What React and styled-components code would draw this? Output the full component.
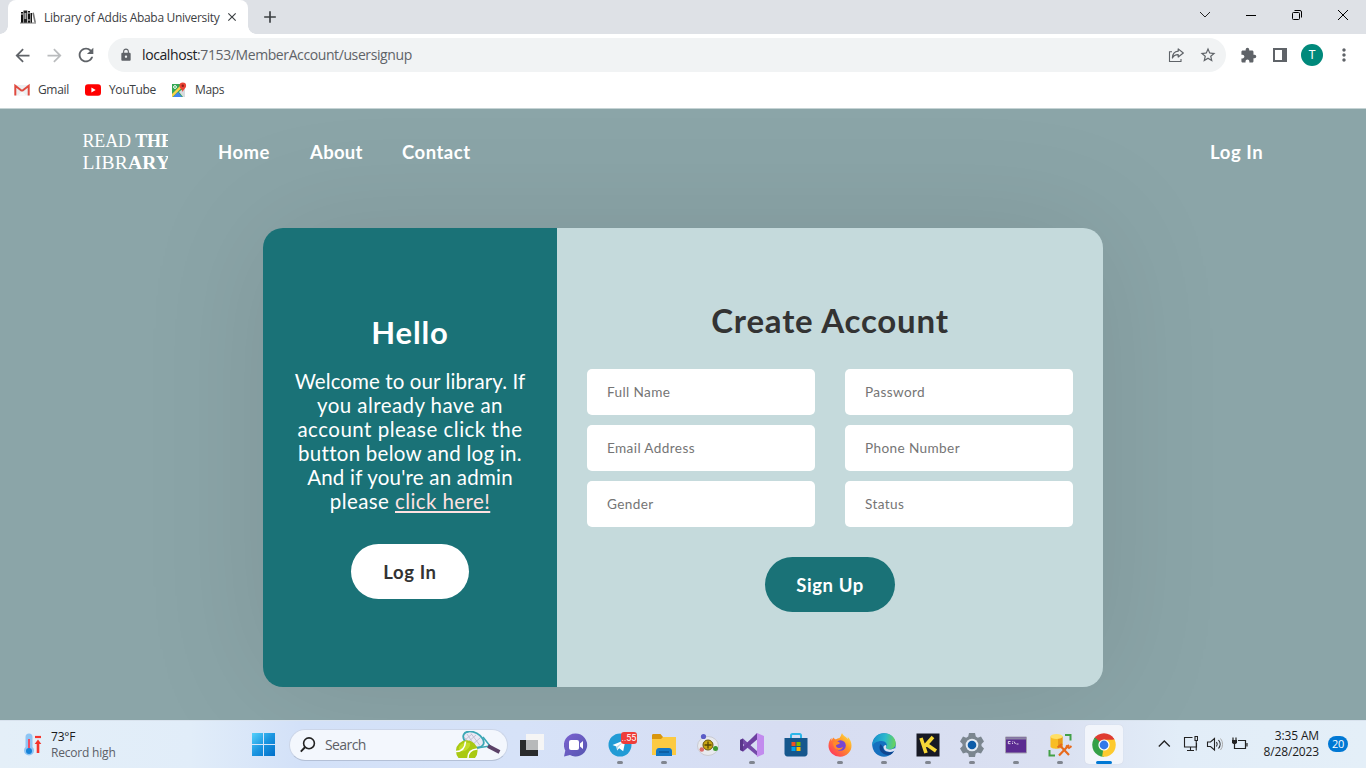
import React from "react";
import styled, { createGlobalStyle, css } from "styled-components";
import { MdArrowBack, MdArrowForward, MdRefresh, MdLock, MdStarBorder, MdExtension, MdMoreVert, MdClose, MdAdd } from "react-icons/md";

const GlobalStyle = createGlobalStyle`
  * { box-sizing: border-box; }
  html, body { margin: 0; padding: 0; }
  body { width: 1366px; height: 768px; overflow: hidden; }
  svg { display: block; flex: none; }
`;

const uiFont = css`font-family: "Open Sans", "Noto Sans", sans-serif;`;
const siteFont = css`font-family: Lato, "Open Sans", sans-serif;`;

const Screen = styled.div`
  width: 1366px;
  height: 768px;
  display: flex;
  flex-direction: column;
  overflow: hidden;
  ${uiFont}
`;

/* Browser chrome */
const TabStrip = styled.div`
  height: 34px;
  flex: none;
  display: flex;
  background: #dee1e6;
  padding-left: 8px;
`;
const Tab = styled.div`
  position: relative;
  width: 240px;
  height: 34px;
  display: flex;
  align-items: center;
  padding: 0 9px 0 12px;
  background: #fff;
  border-radius: 8px 8px 0 0;
  &::before, &::after {
    content: "";
    position: absolute;
    bottom: 0;
    width: 8px;
    height: 8px;
  }
  &::before { left: -8px; background: radial-gradient(circle at 0 0, transparent 7.5px, #fff 8px); }
  &::after { right: -8px; background: radial-gradient(circle at 100% 0, transparent 7.5px, #fff 8px); }
`;
const TabTitle = styled.span`
  margin-left: 8px;
  width: 181px;
  font-size: 12px;
  letter-spacing: -0.3px;
  color: #3c4043;
  white-space: nowrap;
`;
const NewTab = styled.div`
  width: 44px;
  display: flex;
  align-items: center;
  justify-content: center;
  color: #3c4043;
`;
const WindowControls = styled.div`
  margin-left: auto;
  display: flex;
  height: 29px;
`;
const WindowButton = styled.div`
  width: 46px;
  display: flex;
  align-items: center;
  justify-content: center;
`;
const Toolbar = styled.div`
  height: 38px;
  flex: none;
  display: flex;
  align-items: center;
  padding: 4px 6px 0;
  background: #fff;
`;
const ToolButton = styled.div`
  width: 32px;
  height: 34px;
  display: flex;
  align-items: center;
  justify-content: center;
  color: ${(p) => (p.$faded ? "#babcbe" : "#5f6368")};
`;
const Omnibox = styled.div`
  width: 1118px;
  height: 34px;
  margin: 0 6px;
  padding: 0 2px 0 11px;
  display: flex;
  align-items: center;
  border-radius: 17px;
  background: #f1f3f4;
  color: #5f6368;
`;
const Url = styled.span`
  flex: 1;
  margin-left: 9px;
  padding-bottom: 1px;
  font-size: 14px;
  letter-spacing: -0.4px;
  white-space: nowrap;
  color: #5f6368;
  b { font-weight: 400; color: #202124; }
`;
const Avatar = styled.div`
  width: 22px;
  height: 22px;
  border-radius: 50%;
  background: #00897b;
  color: #fff;
  font: 12px/22px Roboto, sans-serif;
  text-align: center;
`;
const Bookmarks = styled.div`
  height: 37px;
  flex: none;
  display: flex;
  align-items: center;
  padding: 0 14px 1px;
  background: #fff;
  border-bottom: 1px solid #c5d3d4;
`;
const Bookmark = styled.div`
  width: ${(p) => p.$width}px;
  display: flex;
  align-items: center;
  gap: 8px;
  font-size: 12px;
  letter-spacing: -0.35px;
  color: #3c4043;
`;

/* Site */
const Site = styled.main`
  height: 611px;
  flex: none;
  background: #8ba5a8;
  overflow: hidden;
  ${siteFont}
`;
const Nav = styled.nav`
  height: 86px;
  display: flex;
  align-items: center;
  padding: 0 103px 0 82px;
  color: #fff;
`;
const Brand = styled.div`
  width: 86px;
  margin-right: 50px;
  padding-left: 0.5px;
  overflow: hidden;
  white-space: nowrap;
  font-family: "Liberation Serif", serif;
`;
const BrandLine = styled.div`
  font-size: ${(p) => p.$size}px;
  line-height: 22px;
  letter-spacing: ${(p) => p.$spacing}px;
`;
const NavLink = styled.a`
  width: ${(p) => p.$width}px;
  margin-right: ${(p) => (p.$last ? 0 : 40)}px;
  margin-left: ${(p) => (p.$last ? "auto" : 0)};
  padding-bottom: 1px;
  font-size: 18.5px;
  line-height: 22px;
  font-weight: 700;
  letter-spacing: ${(p) => p.$spacing || 0}px;
  white-space: nowrap;
`;
const Card = styled.section`
  width: 840px;
  height: 459px;
  margin: 33px auto 0;
  display: flex;
  border-radius: 20px;
  overflow: hidden;
  box-shadow: 0 0 128px rgba(0, 0, 0, 0.1);
`;
const Welcome = styled.div`
  width: 294px;
  display: flex;
  flex-direction: column;
  align-items: center;
  padding-top: 86px;
  background: #1a7277;
  color: #fff;
`;
const Hello = styled.h1`
  margin: 0;
  font-size: 31px;
  line-height: 36px;
  font-weight: 700;
  letter-spacing: 0.9px;
`;
const Message = styled.p`
  margin: 19px 0 31px;
  font-size: 20.5px;
  line-height: 24px;
  text-align: center;
`;
const MessageLine = styled.span`
  display: block;
  white-space: nowrap;
  letter-spacing: ${(p) => p.$spacing || 0}px;
  a { color: #ffe1e1; text-decoration: underline; }
`;
const PillButton = styled.button`
  width: ${(p) => p.$width}px;
  height: 55px;
  padding: 0;
  border: 0;
  border-radius: 28px;
  background: ${(p) => (p.$primary ? "#1a7277" : "#fff")};
  color: ${(p) => (p.$primary ? "#fff" : "#333")};
  font-size: 18.5px;
  line-height: 22px;
  font-weight: 700;
  letter-spacing: 0.6px;
  ${siteFont}
`;
const SignUp = styled.form`
  flex: 1;
  display: flex;
  flex-direction: column;
  align-items: center;
  padding-top: 73px;
  background: #c5dadc;
`;
const FormTitle = styled.h2`
  margin: 0 0 30px;
  font-size: 33px;
  line-height: 38px;
  font-weight: 700;
  letter-spacing: 0.8px;
  color: #333;
`;
const Fields = styled.div`
  display: grid;
  grid-template-columns: 228px 228px;
  gap: 10px 30px;
  margin-bottom: 30px;
`;
const Field = styled.input`
  height: 46px;
  padding: 0 20px;
  border: 0;
  border-radius: 5px;
  background: #fff;
  font-size: 13.6px;
  letter-spacing: 0.38px;
  ${siteFont}
  &::placeholder { color: #757575; }
`;

/* Taskbar */
const Taskbar = styled.footer`
  height: 48px;
  flex: none;
  display: flex;
  align-items: center;
  background: linear-gradient(90deg, #e4eff8 0, #e1edf9 190px, #d3e1f8 300px, #d6e2f8 520px, #d7ddf2 780px, #dae0f1 1050px, #e2edf8 1180px, #e4eff8 1366px);
  border-top: 1px solid #d9e3ee;
`;
const Weather = styled.div`
  width: 242px;
  flex: none;
  padding-left: 23px;
  display: flex;
  align-items: center;
  gap: 8px;
`;
const WeatherText = styled.div`
  font-size: 12px;
  line-height: 16px;
  color: #1b1b1b;
  letter-spacing: -0.2px;
  small { display: block; font-size: 12px; color: #5b6067; }
`;
const TaskSlot = styled.div`
  position: relative;
  width: ${(p) => (p.$active ? 38 : 44)}px;
  height: ${(p) => (p.$active ? 39 : 47)}px;
  margin: ${(p) => (p.$active ? "0 3px" : 0)};
  flex: none;
  display: flex;
  align-items: center;
  justify-content: center;
  ${(p) => p.$active && css`background: #f2f5fb; border-radius: 4px; box-shadow: 0 0 1px #c0c8d5;`}
  &::after {
    content: "";
    display: ${(p) => (p.$open ? "block" : "none")};
    position: absolute;
    bottom: ${(p) => (p.$active ? 0 : 4)}px;
    left: 50%;
    width: ${(p) => (p.$active ? 16 : 6)}px;
    height: 3px;
    transform: translateX(-50%);
    border-radius: 2px;
    background: ${(p) => (p.$active ? "#0078d4" : "#80858f")};
  }
`;
const SearchBox = styled.div`
  width: 219px;
  height: 32px;
  flex: none;
  margin: 0 2px 0 3px;
  padding: 0 6px 0 10px;
  display: flex;
  align-items: center;
  border-radius: 16px;
  border: 1px solid #cbd5e8;
  border-bottom-color: #b4c0d6;
  background: #f3f7fd;
  font-size: 14px;
  color: #5d6066;
`;
const SearchLabel = styled.span`
  flex: 1;
  margin-left: 9px;
  padding-bottom: 1px;
  letter-spacing: -0.6px;
`;
const Badge = styled.span`
  position: absolute;
  top: 11px;
  right: 5px;
  width: 16px;
  height: 12px;
  border-radius: 3px;
  background: #ee3d3a;
  color: #fff;
  font: 9px/12px Roboto, sans-serif;
  text-align: center;
`;
const Tray = styled.div`
  margin-left: auto;
  padding-right: 18px;
  display: flex;
  align-items: center;
`;
const TrayIcons = styled.div`
  display: flex;
  align-items: center;
  gap: 8px;
  padding-bottom: 1px;
`;
const Clock = styled.div`
  width: 68px;
  margin: 0 9px 1px 2px;
  text-align: right;
  font-size: 12px;
  line-height: 16px;
  letter-spacing: -0.15px;
  white-space: nowrap;
  color: #1b1b1b;
`;
const Count = styled.div`
  width: 20px;
  height: 16px;
  margin-bottom: 1px;
  border-radius: 8px;
  background: #0078d4;
  color: #fff;
  font-size: 11px;
  line-height: 16px;
  letter-spacing: -0.4px;
  text-align: center;
`;

const Svg = ({ w = 24, h = w, vb = `0 0 ${w} ${h}`, children }) => (
  <svg width={w} height={h} viewBox={vb} fill="none">{children}</svg>
);

const BooksIcon = () => (
  <Svg w={16}>
    <path d="M1 3h2v11H1zM8 2h2v12H8zM10.5 4h1.5v10h-1.5z" fill="#111" />
    <path d="M3.5 1.5h3.8V14H3.5z" fill="#222" />
    <path d="M4.400 4h2v6h-2z" fill="#aaa" />
    <path d="M0 14h16" stroke="#777" />
    <path d="m12.300 4 1.600-.4L16 13.600h-1.600z" fill="#777" />
    <path d="M1 5h2M8 4h2M8 11h2" stroke="#ddd" />
  </Svg>
);
const ShareIcon = () => (
  <Svg w={16} vb="0 0 16 16">
    <path d="M4 4.700H1.500v9.800h11.500v-2.500" stroke="#5f6368" strokeWidth="1.100" />
    <path d="M10.200 1.900 15.300 6l-5.100 4V7.700C7.500 7.600 5.600 8.700 4.400 11c.1-4 2.200-6.400 5.800-6.800z" stroke="#5f6368" strokeWidth="1.200" strokeLinejoin="round" />
  </Svg>
);
const GmailIcon = () => (
  <Svg w={16}>
    <path d="M1 3h14v10.500H1z" fill="#eceff1" />
    <path d="M1.300 13.500V3.800L8 9l6.700-5.200v9.700" stroke="#e04b40" strokeWidth="2" />
    <path d="M4 13.500 8 9l4 4.500z" fill="#fafafa" />
  </Svg>
);
const YouTubeIcon = () => (
  <Svg w={16}><rect y="2.200" width="16" height="11.600" rx="3" fill="#f00" /><path d="m6.400 5.500 4.300 2.500-4.300 2.500z" fill="#fff" /></Svg>
);
const MapsIcon = () => (
  <Svg w={16}>
    <path d="M1 2h12v13H1z" fill="#34a853" />
    <path d="m2 15 5-5 4 5z" fill="#4285f4" />
    <path d="m9 9 5-3v9h-2L8 10z" fill="#d8dce0" />
    <path d="m1 12 8-8 1.700 1.700L1.500 15H1z" fill="#fbd24b" />
    <circle cx="4" cy="5" r="1.400" stroke="#fff" />
    <path d="M11.800 10C11 7 8.500 6.500 8.500 3.800a3.300 3.300 0 0 1 6.600 0C15.100 6.500 12.500 7 11.800 10z" fill="#ea4335" />
    <circle cx="11.800" cy="3.800" r="1.200" fill="#8c2018" />
  </Svg>
);

const ThermometerIcon = () => (
  <Svg w={20} h={24}>
    <path d="M2.500 4a3.500 3.500 0 0 1 7 0v10a5 5 0 1 1-7 0z" fill="#8fc5f4" />
    <path d="M5 6h2v11H5z" fill="#ef4d63" />
    <circle cx="6" cy="18" r="3" fill="#1683d8" />
    <path d="M12 4h6" stroke="#f5342b" strokeWidth="2.200" />
    <path d="m15 6.500 3.300 4.500h-2v9h-2.600v-9h-2z" fill="#f5342b" />
  </Svg>
);
const WindowsIcon = () => (
  <Svg w={24}>
    <defs><linearGradient id="win" x1="0" y1="0" x2="1" y2="1"><stop stopColor="#55d1fb" /><stop offset=".5" stopColor="#1b95e0" /><stop offset="1" stopColor="#006fc9" /></linearGradient></defs>
    <path d="M0 0h11v11H0zM12 0h11v11H12zM0 12h11v11H0zM12 12h11v11H12z" fill="url(#win)" />
  </Svg>
);
const SearchIcon = () => (
  <Svg w={16}><circle cx="9" cy="6.300" r="5.400" stroke="#222" strokeWidth="1.600" /><path d="M5.200 10 .8 14.600" stroke="#222" strokeWidth="1.900" /></Svg>
);
const TennisIcon = () => (
  <Svg w={46} h={28}>
    <path d="m22 17 13-2-7-9" stroke="#3ba7b5" strokeWidth="1.500" />
    <ellipse cx="18.500" cy="8.500" rx="11" ry="7" transform="rotate(28 18.500 8.500)" fill="#e9e9f4" stroke="#3ba7b5" strokeWidth="1.800" />
    <path d="M12 3l8 12M16 2.500l9 12M9 6l8 9M21 4 12 12M25 7 16 15M17 3l-7 6" stroke="#b9b6cc" strokeWidth=".8" />
    <path d="m33 15 11.500 6" stroke="#5b4267" strokeWidth="3.800" />
    <path d="M3.500 27a10.800 10.800 0 1 1 16.500 0z" fill="#a9c912" />
    <path d="M4 16a9 9 0 0 1 11-4c1 3-2 7-6 8s-6-1-5-4z" fill="#c3dc28" />
    <path d="M1 20.500c6 0 9-3 9.500-10M13 27c0-5 3-8.500 9-9" stroke="#fff" strokeWidth="1.600" />
  </Svg>
);
const TaskViewIcon = () => (
  <Svg w={24}>
    <path d="M0 7h18v16H0z" fill="#292b2c" />
    <path d="M6 1h18v16H6z" fill="#f5f5f5" /><path d="M6 7h12v10H6z" fill="#b7b9ba" />
  </Svg>
);
const ChatIcon = () => (
  <Svg w={24}>
    <defs><linearGradient id="chat" x1="0" y1="0" x2="1" y2="1"><stop stopColor="#7b62d0" /><stop offset="1" stopColor="#5556b0" /></linearGradient></defs>
    <path d="M11.500 .5a11.500 11.500 0 1 1-5.500 21.500L0 23.500l1.300-6A11.500 11.500 0 0 1 11.500 .5z" fill="url(#chat)" />
    <rect x="5" y="7" width="10" height="10" rx="2" fill="#fff" /><path d="m16 10.500 3-2.500v8l-3-2.500z" fill="#fff" />
  </Svg>
);
const TelegramIcon = () => (
  <Svg w={24}>
    <circle cx="12" cy="12" r="11.500" fill="#219bd5" />
    <path d="m4.500 12 13-5.200-2.300 11.500-4-3-2.100 2.100-.8-4z" fill="#fff" /><path d="m8.500 13.400 6.500-4.300-5 5.500-.5 2.800z" fill="#b9dbea" />
  </Svg>
);
const FolderIcon = () => (
  <Svg w={26} h={24}>
    <path d="M1 2.500c0-1 .5-1.500 1.500-1.500h7L12 4h12.500v8H1z" fill="#d9960d" />
    <path d="M1 6h9l2-2h13v18H1z" fill="#fcca42" />
    <path d="M5 23v-5c0-1.500 1-3 3-3h10c2 0 3 1.500 3 3v5z" fill="#1477c5" /><path d="M8 19h10" stroke="#0a579a" strokeWidth="1.500" />
  </Svg>
);
const AtomIcon = () => (
  <Svg w={24}>
    <ellipse cx="12" cy="13" rx="10.500" ry="9.500" fill="#e8eaee" stroke="#cacbd2" />
    <circle cx="12" cy="12" r="5" fill="#c9a514" stroke="#65560c" /><path d="M12 8.500v7M8.500 12h7" stroke="#574706" strokeWidth="1.300" />
    <circle cx="7.500" cy="3.500" r="2.600" fill="#5b5cc7" /><circle cx="5.800" cy="16.500" r="2.300" fill="#da6b6b" /><circle cx="19.500" cy="15.500" r="2.500" fill="#3b9a32" />
  </Svg>
);
const VisualStudioIcon = () => (
  <Svg w={24}>
    <path d="M0 7 3 5.500 18 19v4.500L0 8.500z" fill="#744aa8" />
    <path d="M0 17 3 18.500 18 5V.5L0 15.500z" fill="#8050b5" />
    <path d="M0 7 3 5.500v13L0 17z" fill="#59368a" />
    <path d="m17 0 7 3v18l-7 3z" fill="#c28bee" /><path d="m3 18.500 14-12V0L3 14z" fill="#6c40a0" />
  </Svg>
);
const StoreIcon = () => (
  <Svg w={24}>
    <path d="M7 6V2.500C7 1.500 7.500 1 8.500 1h7c1 0 1.500.5 1.500 1.500V6" stroke="#2bb6e9" strokeWidth="2" />
    <path d="M.5 5h23v15.500c0 1.500-1 3-3 3h-17c-2 0-3-1.500-3-3z" fill="#16578d" />
    <path d="M7.500 9h4v4h-4z" fill="#f25022" /><path d="M12.500 9h4v4h-4z" fill="#7fba00" /><path d="M7.500 14h4v4h-4z" fill="#00a4ef" /><path d="M12.500 14h4v4h-4z" fill="#ffb900" />
  </Svg>
);
const FirefoxIcon = () => (
  <Svg w={24}>
    <defs><linearGradient id="fox" x1="1" y1="0" x2=".1" y2="1"><stop stopColor="#fff04a" /><stop offset=".45" stopColor="#ff9426" /><stop offset="1" stopColor="#ff2b65" /></linearGradient></defs>
    <path d="M14 0c1 3 4 3.500 6 6 0-1-.2-2-.6-2.500 3 3 4.100 6 4.100 9A11.500 11 0 0 1 .5 13C.5 9 2 6.500 3.500 5v3c.5-2 1.500-3 2-3.500.5 1 1.500 1.800 2.500 1.800C9 6 10 5 11.500 5 12.500 4 13 2 14 0z" fill="url(#fox)" />
    <circle cx="12.500" cy="12.500" r="5.300" fill="#7846d1" /><path d="M5 9c3-1 5-1 7 1-1 2-4 1-4 3 1 3 5 2 7 1-2 5-10 4-10-5z" fill="#ff8a2a" />
  </Svg>
);
const EdgeIcon = () => (
  <Svg w={24}>
    <defs>
      <linearGradient id="edgeTop" x1="0" y1=".3" x2="1" y2=".4"><stop stopColor="#168dcc" /><stop offset=".55" stopColor="#2bb9cd" /><stop offset="1" stopColor="#69d359" /></linearGradient>
    </defs>
    <circle cx="12" cy="12" r="11.700" fill="#1570bf" />
    <path d="M.3 11C1.500 4 6 .3 12 .3c7 0 11.700 4.700 11.700 10 0 4-3 6-6.500 6-2.500 0-4-1-3-2.300 2-3-1-6-4.500-6C5 8 1 10 .3 14z" fill="url(#edgeTop)" />
    <path d="M8.500 11c-3 5 1 11 8 11 2 0 4-1.500 5.500-4-5 2.500-11 1-11-4z" fill="#0f4690" />
    <path d="M14 12c1 2-1 2.300.5 3.600 2 1.500 6 1 8-.6l1 2c-4 3.500-12 2-12-3 0-1 1-2 2.500-2z" fill="#dce2f4" />
  </Svg>
);
const KIcon = () => (
  <Svg w={24}>
    <path d="M.5.5h23v23H.5z" fill="#171924" />
    <path d="m5 5 5 15M17 4l-8 9M10 11l10 7" stroke="#f6d737" strokeWidth="3.600" />
  </Svg>
);
const SettingsIcon = () => (
  <Svg w={24}>
    <path d="m9 0 6 0 .8 3.500 2 1.200L21 3.500l3 5-2.500 2.500v2l2.500 2.500-3 5-3.300-1.100-2 1.200L15 24H9l-.8-3.400-2-1.200L3 20.500l-3-5L2.500 13v-2L0 8.500l3-5 3.200 1.200 2-1.200z" fill="#7b868f" />
    <circle cx="12" cy="12" r="6.300" fill="#e4ebf3" /><circle cx="12" cy="12" r="4.300" fill="#0d5ca8" />
  </Svg>
);
const TerminalIcon = () => (
  <Svg w={24}>
    <path d="M1.500 4h21v16h-21z" fill="#5b2b91" stroke="#a3a1ae" /><path d="M2 4.500h20v2H2z" fill="#8b82a4" />
    <path d="M6.500 8.500H4.300v2.200h2.200M8.500 8.500v.8M8.500 10v1M10 8.500l1.500 2.500M12.500 11h2" stroke="#fff" strokeWidth=".8" />
  </Svg>
);
const DatabaseIcon = () => (
  <Svg w={24}>
    <path d="M2.500 3.500v10c0 3 12 3 12 0v-10z" fill="#f8bd24" /><path d="M10 4v11c3 0 4.500-1 4.500-1.500v-10z" fill="#e89a18" /><ellipse cx="8.500" cy="3.500" rx="6" ry="2.500" fill="#ffdf65" />
    <path d="M17 2h5.500v5.500M1.500 17v5.500H7" stroke="#42a047" strokeWidth="2" />
    <path d="m11.500 12 9.500 10M21 12 11 22.500" stroke="#e76a1d" strokeWidth="2.200" /><path d="M9.500 14.500 14 11M18 12.500l3 2.500 2.500-2" stroke="#e76a1d" strokeWidth="2" />
  </Svg>
);
const ChromeIcon = () => (
  <Svg w={24}>
    <path d="M12 12 1.800 6.100A11.800 11.800 0 0 1 22.200 6.100z" fill="#df3c31" />
    <path d="M12 12 22.200 6.100A11.800 11.800 0 0 1 12 23.800z" fill="#fdca2f" />
    <path d="M12 12v11.800A11.800 11.800 0 0 1 1.800 6.100z" fill="#34a047" />
    <path d="M12 6.400h10.400a11.800 11.800 0 0 1 .4 1L12 12z" fill="#fdca2f" />
    <path d="m16.850 14.800-5.200 9-1.500-.2L12 12z" fill="#fdca2f" />
    <path d="m7.150 14.800-5.200-9L2.900 4.500 12 12z" fill="#34a047" />
    <path d="M12 6.400h10.400L21.700 5.300 12 4z" fill="#df3c31" />
    <circle cx="12" cy="12" r="5.600" fill="#fff" /><circle cx="12" cy="12" r="4.400" fill="#3279ea" />
  </Svg>
);

const taskbarApps = [
  { Icon: TaskViewIcon }, { Icon: ChatIcon }, { Icon: TelegramIcon, open: true, badge: "..55" },
  { Icon: FolderIcon, open: true }, { Icon: AtomIcon }, { Icon: VisualStudioIcon, open: true },
  { Icon: StoreIcon }, { Icon: FirefoxIcon, open: true }, { Icon: EdgeIcon, open: true },
  { Icon: KIcon, open: true }, { Icon: SettingsIcon, open: true }, { Icon: TerminalIcon, open: true },
  { Icon: DatabaseIcon, open: true }, { Icon: ChromeIcon, open: true, active: true },
];

const BrowserChrome = () => (
  <>
    <TabStrip>
      <Tab><BooksIcon /><TabTitle>Library of Addis Ababa University</TabTitle><MdClose size={14} color="#3c4043" /></Tab>
      <NewTab><MdAdd size={20} /></NewTab>
      <WindowControls>
        <WindowButton><Svg w={12}><path d="m1 3 5 5 5-5" stroke="#222" /></Svg></WindowButton>
        <WindowButton><Svg w={12}><path d="M1 6.500h10" stroke="#000" /></Svg></WindowButton>
        <WindowButton><Svg w={12}><rect x="1.500" y="3.500" width="7" height="7" rx="1" stroke="#000" /><path d="M3.500 1.500H9a1.500 1.500 0 0 1 1.500 1.500v5.500" stroke="#000" /></Svg></WindowButton>
        <WindowButton><Svg w={12}><path d="m1 1 10 10M11 1 1 11" stroke="#000" /></Svg></WindowButton>
      </WindowControls>
    </TabStrip>
    <Toolbar>
      <ToolButton><MdArrowBack size={21} /></ToolButton>
      <ToolButton $faded><MdArrowForward size={21} /></ToolButton>
      <ToolButton><MdRefresh size={22} /></ToolButton>
      <Omnibox>
        <MdLock size={14} />
        <Url><b>localhost</b>:7153/MemberAccount/usersignup</Url>
        <ToolButton><ShareIcon /></ToolButton>
        <ToolButton><MdStarBorder size={18} /></ToolButton>
      </Omnibox>
      <ToolButton><MdExtension size={17} /></ToolButton>
      <ToolButton><Svg w={14}><path d="M1 1h12v12H1z" stroke="#5f6368" strokeWidth="2" /><path d="M9 1h4v12H9z" fill="#5f6368" /></Svg></ToolButton>
      <ToolButton><Avatar>T</Avatar></ToolButton>
      <ToolButton><MdMoreVert size={20} /></ToolButton>
    </Toolbar>
    <Bookmarks>
      <Bookmark $width={71}><GmailIcon />Gmail</Bookmark>
      <Bookmark $width={86}><YouTubeIcon />YouTube</Bookmark>
      <Bookmark $width={60}><MapsIcon />Maps</Bookmark>
    </Bookmarks>
  </>
);

const SignUpPage = () => (
  <Site>
    <Nav>
      <Brand>
        <BrandLine $size={18} $spacing={-0.15}>READ <b>THE</b></BrandLine>
        <BrandLine $size={19.5} $spacing={0.25}>LIBR<b>ARY</b></BrandLine>
      </Brand>
      <NavLink $width={52} $spacing={0.5}>Home</NavLink>
      <NavLink $width={52} $spacing={0.3}>About</NavLink>
      <NavLink $width={68} $spacing={0.5}>Contact</NavLink>
      <NavLink $width={53} $spacing={0.6} $last>Log In</NavLink>
    </Nav>
    <Card>
      <Welcome>
        <Hello>Hello</Hello>
        <Message>
          <MessageLine $spacing={0.1}>Welcome to our library. If</MessageLine>
          <MessageLine $spacing={0.42}>you already have an</MessageLine>
          <MessageLine $spacing={0.5}>account please click the</MessageLine>
          <MessageLine $spacing={0.27}>button below and log in.</MessageLine>
          <MessageLine $spacing={0.22}>And if you're an admin</MessageLine>
          <MessageLine $spacing={0.42}>please <a>click here!</a></MessageLine>
        </Message>
        <PillButton type="button" $width={118}>Log In</PillButton>
      </Welcome>
      <SignUp>
        <FormTitle>Create Account</FormTitle>
        <Fields>
          <Field placeholder="Full Name" />
          <Field placeholder="Password" />
          <Field placeholder="Email Address" />
          <Field placeholder="Phone Number" />
          <Field placeholder="Gender" />
          <Field placeholder="Status" />
        </Fields>
        <PillButton type="button" $width={130} $primary>Sign Up</PillButton>
      </SignUp>
    </Card>
  </Site>
);

const WindowsTaskbar = () => (
  <Taskbar>
    <Weather><ThermometerIcon /><WeatherText>73°F<small>Record high</small></WeatherText></Weather>
    <TaskSlot><WindowsIcon /></TaskSlot>
    <SearchBox><SearchIcon /><SearchLabel>Search</SearchLabel><TennisIcon /></SearchBox>
    {taskbarApps.map(({ Icon, open, active, badge }, i) => (
      <TaskSlot key={i} $open={open} $active={active}><Icon />{badge && <Badge>{badge}</Badge>}</TaskSlot>
    ))}
    <Tray>
      <TrayIcons>
        <Svg w={14}><path d="m.8 9.500 5.500-5.500 5.500 5.500" stroke="#222" strokeWidth="1.300" /></Svg>
        <Svg w={18}><path d="M12.500 2.500H4.500v9.500h12V8M7 15.500h7M10.500 12v3.500M15 1.500h2.500v4H15zM16.250 5.500v10" stroke="#222" strokeWidth="1.100" /></Svg>
        <Svg w={17}><path d="M1.500 6v4.500h3l4 3.500V2.500l-4 3.500zM10.500 6a4 4 0 0 1 0 4.500M12.500 4a6.500 6.500 0 0 1 0 8.500" stroke="#222" strokeWidth="1.100" /><path d="M14.500 2.500a9 9 0 0 1 0 11.500" stroke="#aaa" /></Svg>
        <Svg w={18} h={16}><path d="M7 4.500h7.500v8H6M16 7v3.500M3.500 8v4.500H6M2 1.500v3M5 1.500v3" stroke="#222" strokeWidth="1.200" /><path d="M1 4h5v3L4.500 8h-2L1 7z" fill="#222" /></Svg>
      </TrayIcons>
      <Clock>3:35 AM<br />8/28/2023</Clock>
      <Count>20</Count>
    </Tray>
  </Taskbar>
);

export default function App() {
  return (
    <Screen>
      <GlobalStyle />
      <BrowserChrome />
      <SignUpPage />
      <WindowsTaskbar />
    </Screen>
  );
}
